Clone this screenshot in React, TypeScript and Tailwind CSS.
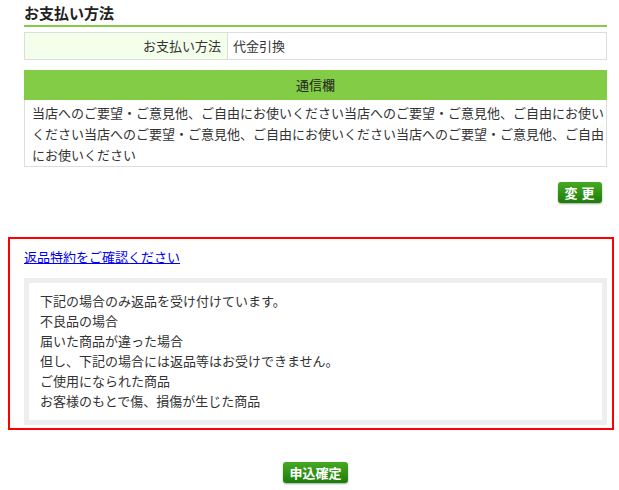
import React from 'react';

const memo =
  '当店へのご要望・ご意見他、ご自由にお使いください当店へのご要望・ご意見他、ご自由にお使いください当店へのご要望・ご意見他、ご自由にお使いください当店へのご要望・ご意見他、ご自由にお使いください';

const returnLines = [
  '下記の場合のみ返品を受け付けています。',
  '不良品の場合',
  '届いた商品が違った場合',
  '但し、下記の場合には返品等はお受けできません。',
  'ご使用になられた商品',
  'お客様のもとで傷、損傷が生じた商品',
];

const GreenButton: React.FC<{ children: React.ReactNode; className?: string }> = ({ children, className }) => (
  <button
    type="button"
    className={`h-[21px] rounded-[3px] bg-linear-to-b from-[#45aa22] to-[#1c7c0a] text-[13px] font-bold leading-[21px] text-white shadow-[0_1px_2px_rgba(0,0,0,0.35)] ${className ?? ''}`}
  >
    {children}
  </button>
);

export default function App() {
  return (
    <div
      className="min-h-[490px] w-[619px] bg-white text-[13px] text-[#333]"
      style={{ fontFamily: '"Noto Sans CJK JP", "Noto Sans", sans-serif' }}
    >
      <div className="ml-[24px] w-[583px]">
        <h2 className="h-[25px] pt-[2px] text-[15px] font-bold leading-[21px] text-[#222]">お支払い方法</h2>
        <div className="h-[2px] bg-[#82cc46]" />

        <div className="mt-[5px] flex h-[28px] border border-[#dddddd]">
          <div className="w-[203px] border-r border-[#dddddd] bg-[#f3ffea] pr-[6px] text-right leading-[26px]">
            お支払い方法
          </div>
          <div className="flex-1 pl-[5px] leading-[26px]">代金引換</div>
        </div>

        <div className="mt-[10px] h-[30px] bg-[#82cc46] text-center leading-[30px] text-[#222]">通信欄</div>
        <div className="border-x border-b border-[#dddddd] pb-[1px] pl-[7px] pt-[2px] leading-[21px]">{memo}</div>

        <div className="mt-[15px] flex justify-end pr-[5px]">
          <GreenButton className="w-[44px] tracking-[4px] pl-[3px]">変更</GreenButton>
        </div>
      </div>

      <div className="ml-[8px] mt-[34px] w-[606px] border-2 border-[#ff0000] pb-[3px] pl-[14px] pr-[5px] pt-[8px]">
        <a href="#" className="block leading-[20px] text-[#0000ee] underline">
          返品特約をご確認ください
        </a>
        <div className="mt-[11px] border-[5px] border-[#eeeeee] pb-[9px] pl-[11px] pt-[8px]">
          {returnLines.map((line) => (
            <p key={line} className="leading-[20px]">
              {line}
            </p>
          ))}
        </div>
      </div>

      <div className="ml-[24px] mt-[32px] flex w-[583px] justify-center">
        <GreenButton className="w-[65px]">申込確定</GreenButton>
      </div>
    </div>
  );
}
